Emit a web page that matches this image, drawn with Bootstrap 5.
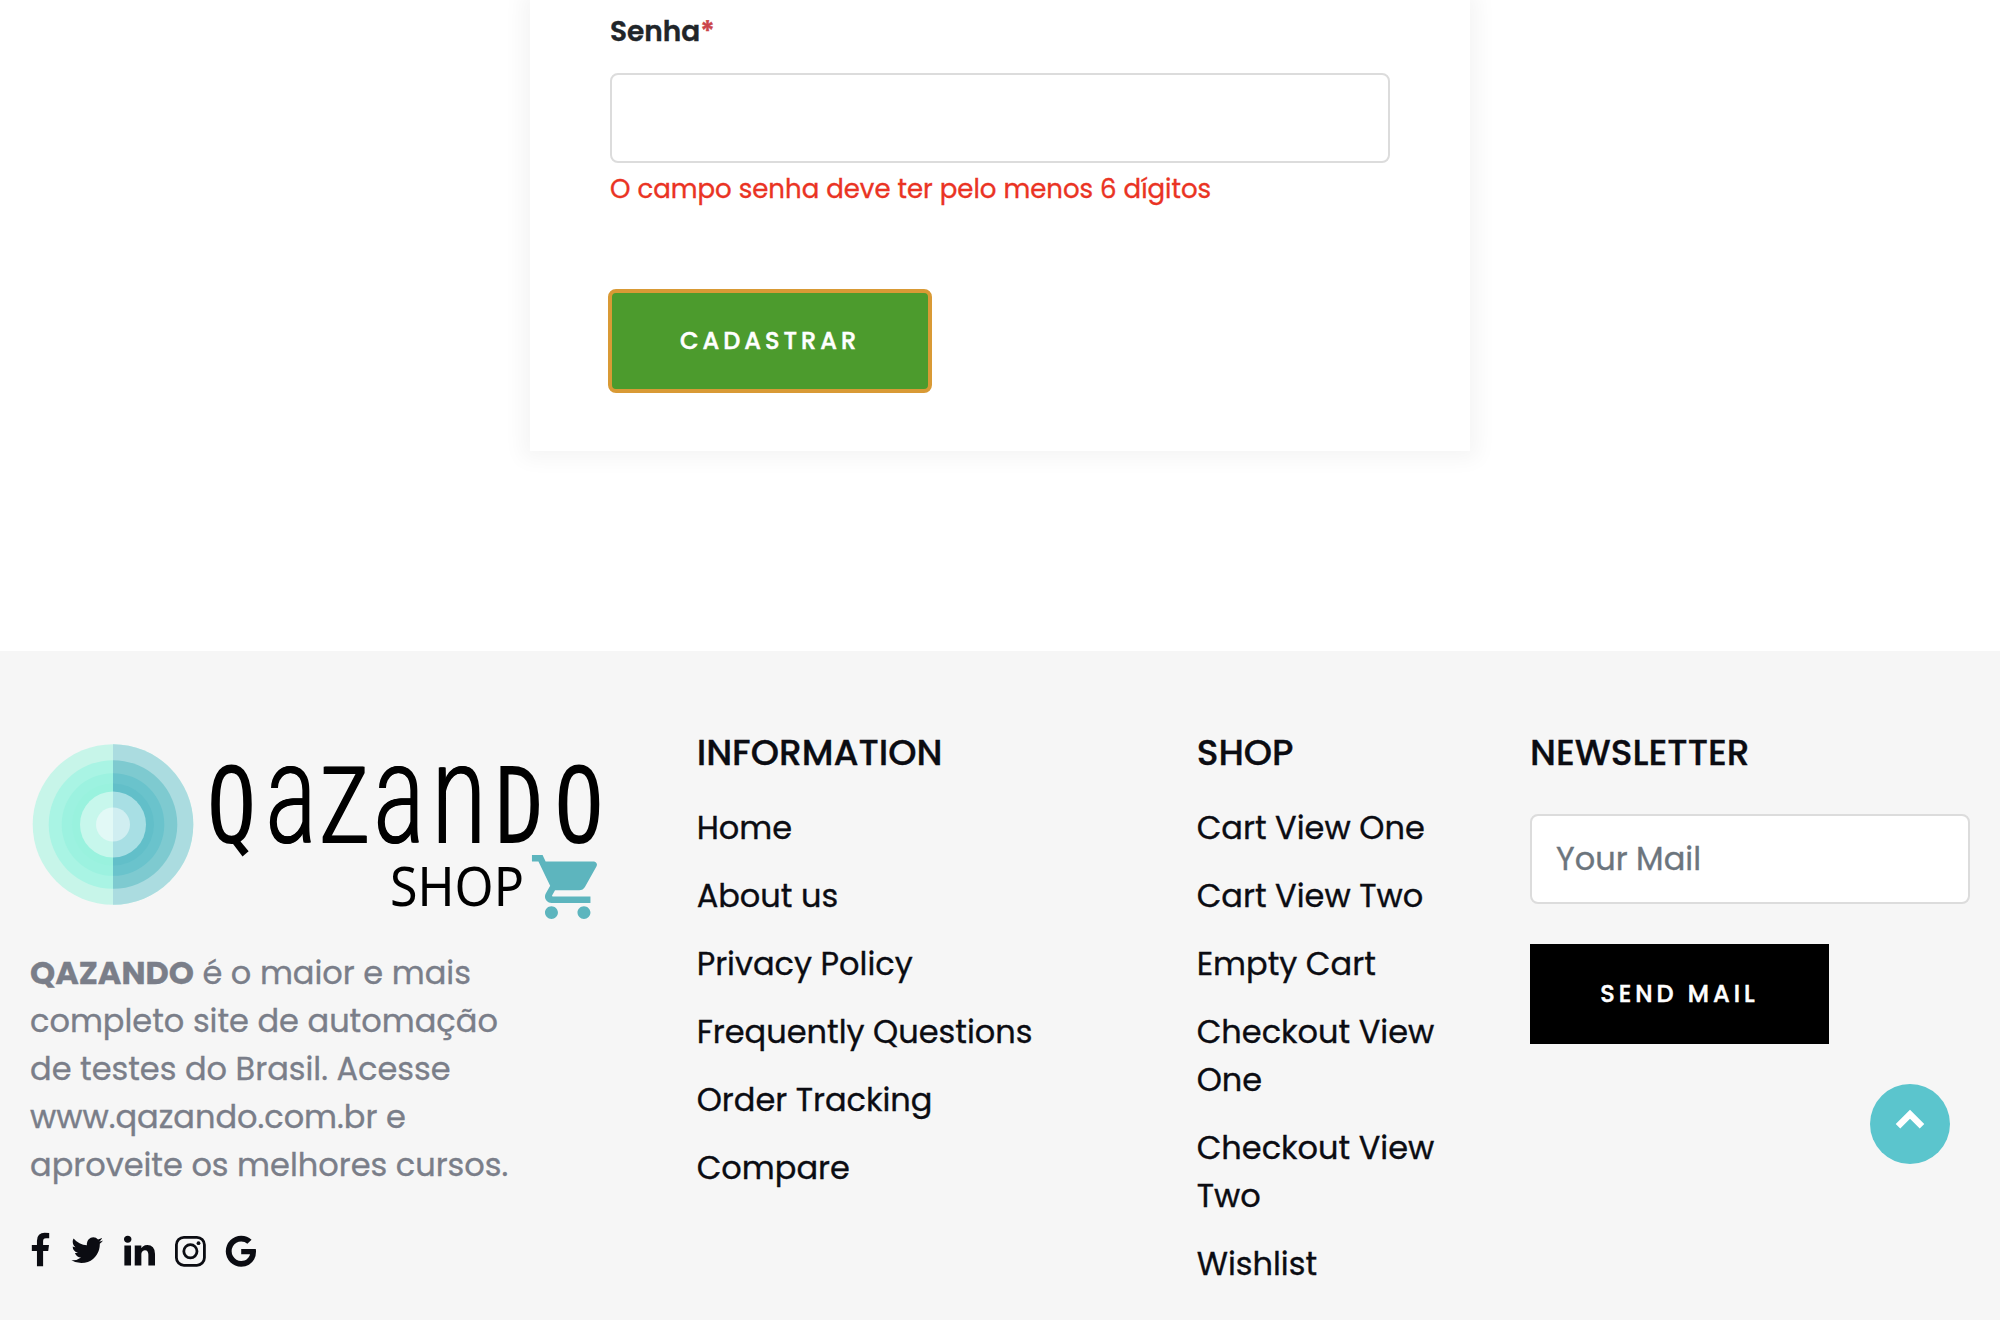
<!DOCTYPE html>
<html lang="pt-BR">
<head>
<meta charset="utf-8">
<meta name="viewport" content="width=device-width, initial-scale=1">
<title>Qazando Shop</title>
<link href="https://cdn.jsdelivr.net/npm/bootstrap@5.3.0/dist/css/bootstrap.min.css" rel="stylesheet">
<style>
  body { font-family: Poppins, Inter, "Open Sans", sans-serif; font-size: 32px; line-height: 48px; color: #0b0c12; background: #fff; height: 1320px; overflow: hidden; -webkit-text-stroke: .35px; }
  .signup { width: 940px; height: 451px; padding: 11px 80px 0; box-shadow: 0 0 20px 8px rgba(0,0,0,.045); }
  .signup label { font-size: 28px; line-height: 42px; font-weight: 600; color: #212529; margin-bottom: 20px; }
  .signup label span { color: #cb444a; }
  .field { height: 90px; border: 2px solid #dcdcdc; border-radius: 8px; font-size: 32px; padding: 0 24px; }
  .field::placeholder { color: #6c757d; }
  .error-text { font-size: 26px; line-height: 40px; color: #ea3323; margin: 6px 0 80px; white-space: nowrap; }
  .btn-wide { font-size: 24px; font-weight: 500; color: #fff; border-radius: 0; padding: 0; letter-spacing: 4px; -webkit-text-stroke: .5px; }
  .btn-signup { width: 324px; height: 104px; margin-left: -2px; background: #4c9b2d; border: 4px solid #d99a35; border-radius: 8px; }
  .btn-mail { width: 299px; height: 100px; margin-top: 40px; background: #000; border: 0; }
  .site-footer { margin-top: 200px; height: 669px; padding: 80px 30px 0; background: #f6f6f6; }
  .site-footer .row { --bs-gutter-x: 60px; }
  .site-footer h3 { font-size: 36px; line-height: 44px; font-weight: 500; margin: 0 0 29px; white-space: nowrap; }
  .site-footer h3.news-title { margin-bottom: 39px; }
  .site-footer li { margin-bottom: 20px; }
  .site-footer li a { color: inherit; text-decoration: none; }
  .about { color: #7a7e89; margin: 26px 0 43px; white-space: nowrap; }
  .logo { overflow: visible; -webkit-text-stroke: 0; }
  .logo-lower { text-shadow: 1.1px 0 0 #000, -1.1px 0 0 #000; }
  .to-top { position: fixed; right: 50px; bottom: 156px; width: 80px; height: 80px; background: #5bc5cd; }
</style>
</head>
<body>
<main>
  <form class="signup mx-auto">
    <label class="d-block" for="senha">Senha<span>*</span></label>
    <input id="senha" type="password" class="form-control field">
    <p class="error-text">O campo senha deve ter pelo menos 6 dígitos</p>
    <button type="button" class="btn btn-wide btn-signup">CADASTRAR</button>
  </form>
</main>
<footer class="site-footer">
  <div class="row">
    <div class="col-4">
      <svg class="logo d-block" width="574" height="192" viewBox="30 731 574 192">
        <g>
          <circle cx="113" cy="824.5" r="80.3" fill="#c7f5e9"/><circle cx="113" cy="824.5" r="64.3" fill="#a9f4e4"/><circle cx="113" cy="824.5" r="51.3" fill="#9cf2e0"/><circle cx="113" cy="824.5" r="41" fill="#99f2de"/><circle cx="113" cy="824.5" r="33" fill="#c7f7ec"/><circle cx="113" cy="824.5" r="17" fill="#e2f9f6"/>
        </g>
        <clipPath id="rightHalf"><rect x="113" y="740" width="90" height="170"/></clipPath>
        <g clip-path="url(#rightHalf)">
          <circle cx="113" cy="824.5" r="80.3" fill="#abdce0"/><circle cx="113" cy="824.5" r="64.3" fill="#7ecad0"/><circle cx="113" cy="824.5" r="51.3" fill="#6ac3cc"/><circle cx="113" cy="824.5" r="41" fill="#62bfc9"/><circle cx="113" cy="824.5" r="33" fill="#a8dfe4"/><circle cx="113" cy="824.5" r="17" fill="#d0eef1"/>
        </g>
        <g font-family="'DejaVu Sans Mono', monospace" font-size="106" fill="#000">
          <text x="206.5" y="843" textLength="50" lengthAdjust="spacingAndGlyphs">Q</text>
          <text x="495" y="843" textLength="49" lengthAdjust="spacingAndGlyphs">D</text>
          <text x="554" y="843" textLength="50" lengthAdjust="spacingAndGlyphs">O</text>
        </g>
        <g class="logo-lower" font-family="Roboto, Inter, sans-serif" font-size="143" font-weight="300" fill="#000">
          <text x="266" y="843" textLength="50" lengthAdjust="spacingAndGlyphs">a</text>
          <text x="319" y="843" font-size="144" textLength="50" lengthAdjust="spacingAndGlyphs">z</text>
          <text x="374" y="843" textLength="50" lengthAdjust="spacingAndGlyphs">a</text>
          <text x="432" y="843" textLength="54" lengthAdjust="spacingAndGlyphs">n</text>
        </g>
        <text x="390" y="906" font-family="'Noto Sans', 'Open Sans', sans-serif" font-size="54" textLength="134" lengthAdjust="spacingAndGlyphs">SHOP</text>
        <path transform="translate(528.7 848.6) scale(3.25 3.2)" fill="#5db5be" d="M7 18c-1.1 0-1.99.9-1.99 2S5.9 22 7 22s2-.9 2-2-.9-2-2-2zM1 2v2h2l3.6 7.59-1.35 2.45c-.16.28-.25.61-.25.96 0 1.1.9 2 2 2h12v-2H7.42c-.14 0-.25-.11-.25-.25l.03-.12.9-1.63h7.45c.75 0 1.41-.41 1.75-1.03l3.58-6.49c.08-.14.12-.31.12-.48 0-.55-.45-1-1-1H5.21l-.94-2H1zm16 16c-1.1 0-1.99.9-1.99 2s.89 2 1.99 2 2-.9 2-2-.9-2-2-2z"/>
      </svg>
      <p class="about"><b>QAZANDO</b> é o maior e mais<br>completo site de automação<br>de testes do Brasil. Acesse<br>www.qazando.com.br e<br>aproveite os melhores cursos.</p>
      <svg class="d-block" width="230" height="36" viewBox="30 1232 230 36" fill="#0b0c12">
        <path transform="translate(22.2 1232.8) scale(.0201)" d="M1343 12v264h-157q-86 0-116 36t-30 108v189h293l-39 296h-254v759h-306v-759h-255v-296h255v-218q0-186 104-288.5t277-102.5q147 0 228 12z"/>
        <path transform="translate(69.2 1232.2) scale(.0201)" d="M1684 408q-67 98-162 167 1 14 1 42 0 130-38 259.5t-115.5 248.5-184.5 210.5-258 146-323 54.5q-271 0-496-145 35 4 78 4 225 0 401-138-105-2-188-64.5t-114-159.5q33 5 61 5 43 0 85-11-112-23-185.5-111.5t-73.5-205.5v-4q68 38 146 41-66-44-105-115t-39-154q0-88 44-163 121 149 294.5 238.5t371.5 99.5q-8-38-8-74 0-134 94.5-228.5t228.5-94.5q140 0 236 102 109-21 205-78-37 115-142 178 93-10 186-50z"/>
        <path transform="translate(121.4 1232.8) scale(.0202)" d="M477 625v991h-330v-991h330zm21-306q1 73-50.5 122t-135.5 49h-2q-82 0-132-49t-50-122q0-74 51.5-122.5t134.5-48.5 133 48.5 51 122.5zm1166 729v568h-329v-530q0-105-40.5-164.5t-126.5-59.5q-63 0-105.5 34.5t-63.5 85.5q-11 30-11 81v553h-329q2-399 2-647t-1-296l-1-48h329v144h-2q20-32 41-56t56.5-52 87-43.5 114.5-15.5q171 0 275 113.5t104 332.5z"/>
        <g fill="none" stroke="#0b0c12" stroke-width="2.8"><rect x="176.4" y="1237.3" width="28" height="28" rx="7.5"/><circle cx="190.4" cy="1251.3" r="6.6"/></g>
        <circle cx="198.5" cy="1243.2" r="1.9"/>
        <path transform="translate(223.2 1233.2) scale(.0201)" d="M896 786h725q12 67 12 128 0 217-91 387.5t-259.5 266.5-386.5 96q-157 0-299-60.5t-245-163.5-163.5-245-60.5-299 60.5-299 163.5-245 245-163.5 299-60.5q300 0 515 201l-209 201q-123-119-306-119-129 0-238.5 65t-173.5 176.5-64 243.5 64 243.5 173.5 176.5 238.5 65q87 0 160-24t120-60 82-82 51.5-87 22.5-78h-436v-264z"/>
      </svg>
    </div>
    <div class="col-3">
      <h3>INFORMATION</h3>
      <ul class="list-unstyled">
        <li><a href="#">Home</a></li><li><a href="#">About us</a></li><li><a href="#">Privacy Policy</a></li><li><a href="#">Frequently Questions</a></li><li><a href="#">Order Tracking</a></li><li><a href="#">Compare</a></li>
      </ul>
    </div>
    <div class="col-2">
      <h3>SHOP</h3>
      <ul class="list-unstyled">
        <li><a href="#">Cart View One</a></li><li><a href="#">Cart View Two</a></li><li><a href="#">Empty Cart</a></li><li><a href="#">Checkout View One</a></li><li><a href="#">Checkout View Two</a></li><li><a href="#">Wishlist</a></li>
      </ul>
    </div>
    <div class="col-3">
      <h3 class="news-title">NEWSLETTER</h3>
      <input type="email" class="form-control field" placeholder="Your Mail">
      <button type="button" class="btn btn-wide btn-mail">SEND MAIL</button>
    </div>
  </div>
</footer>
<a href="#" class="to-top rounded-circle d-block" aria-label="Topo">
  <svg class="d-block" width="80" height="80" viewBox="1870 1084 80 80"><path d="M1898 1126.3L1910 1114.3L1922 1126.3" fill="none" stroke="#fff" stroke-width="6.4"/></svg>
</a>
<script src="https://cdn.jsdelivr.net/npm/bootstrap@5.3.0/dist/js/bootstrap.bundle.min.js"></script>
</body>
</html>
